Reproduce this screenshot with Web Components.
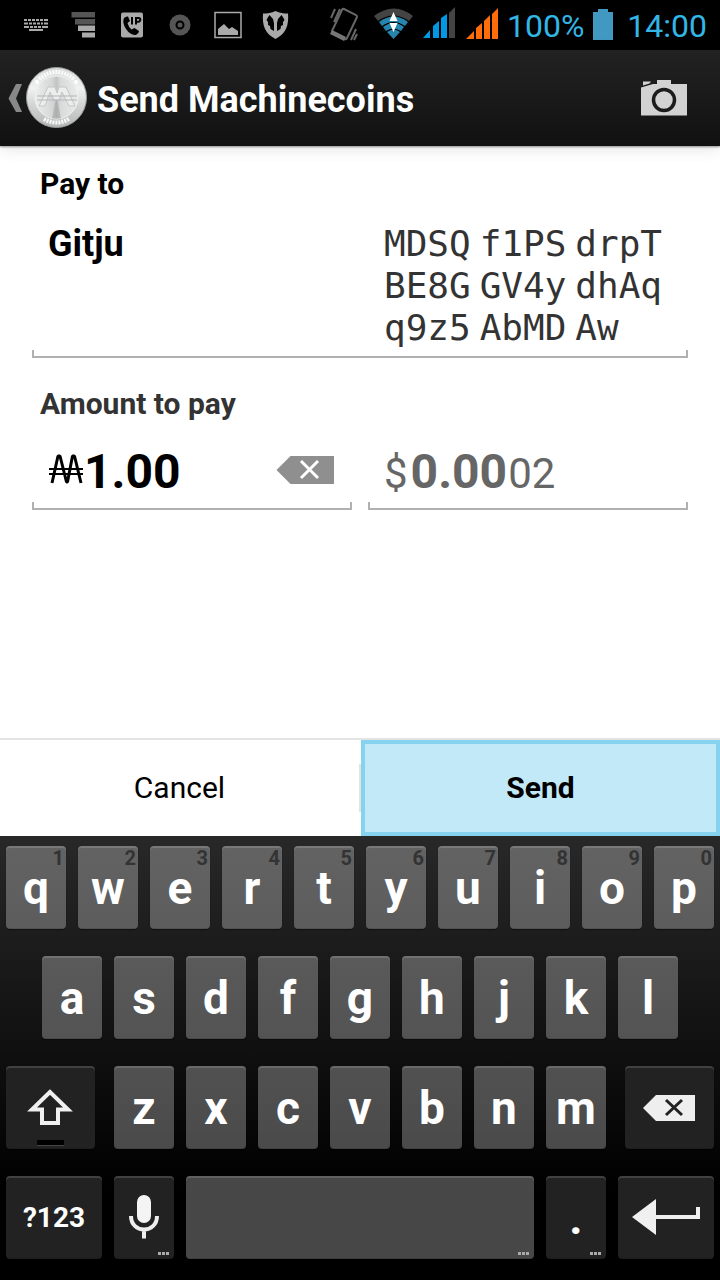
<!DOCTYPE html>
<html lang="en">
<head>
<meta charset="utf-8">
<meta name="viewport" content="width=device-width, initial-scale=1">
<title>Send Machinecoins</title>
<style>
  body { margin: 0; background: #fff; font-family: Roboto, "Noto Sans", sans-serif; }
</style>
</head>
<body>
<send-screen></send-screen>

<template id="status-bar">
  <style>
    :host { display: flex; justify-content: space-between; align-items: center; height: 50px; padding: 0 13px 0 18px; background: #000; color: #33b5e5; font-size: 32px; line-height: 48px; }
    div { display: flex; align-items: center; }
    .notes { gap: 12px; }
    .system { gap: 8px; }
    span { padding-top: 2px; }
    svg { display: block; flex: none; }
  </style>
  <div class="notes">
    <svg width="36" height="50" viewBox="18 0 36 50" fill="#aaa"><path d="M24 19h3v2h-3zM28 19h3v2h-3zM32 19h3v2h-3zM36 19h3v2h-3zM40 19h3v2h-3zM44 19h4v2h-4zM24 22.500h4v2h-4zM29 22.500h3v2h-3zM33 22.500h3v2h-3zM37 22.500h3v2h-3zM41 22.500h2v2h-2zM44 22.500h4v2h-4zM24 26h5v2h-5zM30 26h3v2h-3zM34 26h3v2h-3zM38 26h3v2h-3zM42 26h6v2h-6zM29 29h14v2H29z"/></svg>
    <svg width="36" height="50" viewBox="66 0 36 50"><path fill="#555" d="M71.500 12H95v5.500H71.500zM75 19h20v5.500H75z"/><path fill="#aaa" d="M78 25.500h17V31H78zM82 32.500h13v5H82z"/></svg>
    <svg width="36" height="50" viewBox="114 0 36 50"><rect x="121" y="12.500" width="22" height="25" rx="2" fill="#aaa"/><path d="M124 18q2-2 4-1.500l2 4.500-2.500 2q1 4 4 6.500l3-1.500 4.500 3q0 2.500-3 4-6 0-10-6-4-6-2-11z"/><path fill="none" stroke="#000" stroke-width="2" d="M132 17v7.500M136 24.500V18h2.500a1.800 1.800 0 0 1 0 3.700H136"/></svg>
    <svg width="36" height="50" viewBox="162 0 36 50"><circle cx="180" cy="25" r="10.500" fill="#555"/><circle cx="180" cy="25" r="3.500" fill="none" stroke="#000" stroke-width="2"/></svg>
    <svg width="36" height="50" viewBox="210 0 36 50"><path fill="none" stroke="#aaa" stroke-width="1.500" d="M215 12.500h26v25h-26z"/><path fill="#aaa" d="M218 35v-6l6-5 5 5 3-2 6 4v4z"/></svg>
    <svg width="36" height="50" viewBox="258 0 36 50"><path fill="#aaa" d="M275.500 11c4 2 8 2.500 12.500 2.500 1 12-2 20-12.500 25.500-10.500-5.500-13.500-13.500-12.500-25.500 4.500 0 8.500-.5 12.500-2.500z"/><path d="M269.500 15l3.500 4 1 4v8l-3.500-2-.5-3-2-1v-3l-1.500-2 1-2zM281.500 15l-3.500 4-1 4v8l3.500-2 .5-3 2-1v-3l1.500-2-1-2z"/></svg>
  </div>
  <div class="system">
    <svg width="37" height="50" viewBox="329 0 37 50"><g fill="none" stroke="#666" stroke-width="2"><path d="M345 9l12 6q1.500 1 1 2l-10 21q-1 2-3 1l-11-6q-1.500-1-1-2l10-21q.5-1.500 2-1zM341 9l-6 13M336 9l-4 9M357 29l-5 11M358 34l-3 6"/></g><path fill="#777" d="M333 30l14 7-2 4-14-7z"/></svg>
    <svg width="40" height="50" viewBox="372 0 40 50"><path fill="#444" d="M373 16q20-15 39 0l-4 5q-16-11-31 0z"/><path fill="#2585ad" d="M378 22q15-11 29 0l-3 4q-12-8-23 0zM382 27q11-8 21 0l-3 4q-8-5-15 0zM386 32q7-5 13 0l-6.500 7z"/><path fill="#fff" d="M392.500 12l4 9h-8zM392.500 32l4-9h-8z"/></svg>
    <svg width="36" height="50" viewBox="420 0 36 50"><path fill="#0099e5" d="M422 38l7-8v8zM432 38V26l6-5v17zM440 38V18l6-4v24z"/><path fill="#444" d="M448 38V13l6-6v31z"/></svg>
    <svg width="34" height="50" viewBox="464 0 34 50"><path fill="#ff6d0a" d="M465 39l8-8v8zM475 39V28l6-5v16zM483 39V21l6-6v24zM491 39V14l6-6v31z"/></svg>
    <span>100%</span>
    <svg width="27" height="50" viewBox="593 0 27 50"><path fill="#4199c2" d="M594 12h5V9h10v3h5v28h-20z"/></svg>
    <span>14:00</span>
  </div>
</template>

<template id="action-bar">
  <style>
    :host { display: flex; align-items: center; height: 96px; padding: 0 24px 0 8px; color: #fff; background: linear-gradient(#222, #111); box-shadow: 0 1px 2px rgba(0,0,0,.4), 0 2px 16px rgba(0,0,0,.12); position: relative; }
    button { border: 0; padding: 0; background: none; display: flex; align-items: center; color: inherit; }
    h1 { flex: 1; margin: 0 0 0 10px; padding-top: 4px; font-size: 36px; line-height: 48px; font-weight: 700; }
  </style>
  <button aria-label="Back">
    <svg width="79" height="96" viewBox="8 50 79 96">
      <defs>
        <linearGradient id="coin" x2="0" y2="1"><stop offset="0" stop-color="#d8d9d9"/><stop offset=".35" stop-color="#f0f1f1"/><stop offset=".6" stop-color="#d5d7d7"/><stop offset="1" stop-color="#b5b7b7"/></linearGradient>
        <linearGradient id="face" x2="1" y2="0"><stop offset="0" stop-color="#eceded"/><stop offset=".4" stop-color="#d5d7d7"/><stop offset=".5" stop-color="#c2c4c4"/><stop offset=".6" stop-color="#d9dbdb"/><stop offset="1" stop-color="#e9eaea"/></linearGradient>
      </defs>
      <path fill="#888" d="M16 84h6l-6 14.500 6 13.500h-6L8.500 98.500z"/>
      <circle cx="56.500" cy="97.500" r="30" fill="url(#coin)" stroke="#999b9b"/>
      <path fill="none" stroke="#fafafa" stroke-width="4" stroke-dasharray="2 1" d="M39 79q17.500-14 35 0M44 119q12.500 7 25 0"/>
      <circle cx="56.500" cy="97.500" r="21.500" fill="url(#face)" stroke="#eff0f0"/>
      <circle cx="37" cy="82" r="2" fill="#fff"/><circle cx="76" cy="82" r="2" fill="#fff"/>
      <path fill="#a2a4a4" opacity=".6" d="M56.500 97.500L52 118.500h9z"/>
      <path fill="#eceeee" stroke="#c3c6c6" stroke-width="1" d="M39 106l9-19h7l2 6 2-6h7l9 19h-6l-7-14-3 8h-5l-4-8-5 14z"/>
      <path stroke="#b2b6b6" d="M37 96h40M37 100h40"/>
    </svg>
  </button>
  <h1><slot></slot></h1>
  <button aria-label="Scan QR code">
    <svg width="64" height="96" viewBox="632 50 64 96"><path fill="#d2d2d2" d="M641 87.500l12-3.500h4v-4h14v4h16v31.500h-46z"/><path fill="#d2d2d2" d="M643 81.500h8l-1.500 2-6.500 2z"/><circle cx="664" cy="100" r="10.500" fill="none" stroke="#1b1b1b" stroke-width="3.500"/></svg>
  </button>
</template>

<template id="line-field">
  <style>
    :host { display: block; box-sizing: border-box; min-width: 0; padding: 0 16px 2px;
      background:
        linear-gradient(#b0b0b0, #b0b0b0) left bottom / 100% 2px no-repeat,
        linear-gradient(#b0b0b0, #b0b0b0) left bottom / 2px 8px no-repeat,
        linear-gradient(#b0b0b0, #b0b0b0) right bottom / 2px 8px no-repeat; }
  </style>
  <slot></slot>
</template>

<template id="pay-form">
  <style>
    :host { display: block; padding: 16px 32px; flex: 1; }
    h2, label { display: block; margin: 0; padding: 0 8px; font-size: 30px; line-height: 44px; font-weight: 700; color: #000; }
    label { color: #333; }
    .payee { display: grid; grid-template-columns: 1fr 1fr; column-gap: 16px; padding: 17px 0 7px; font-size: 36px; line-height: 42px; }
    .address { padding-left: 16px; margin-right: -8px; color: #333; }
    .address span { font-family: "DejaVu Sans Mono", monospace; }
    .to { margin-bottom: 24px; }
    .amounts { display: grid; grid-template-columns: repeat(2, minmax(0, 1fr)); gap: 16px; }
    .amount { box-sizing: border-box; display: flex; height: 82px; line-height: 76px; font-size: 42px; color: #666; }
    .coin { align-items: center; padding-top: 6px; color: #000; }
    .local { align-items: baseline; padding-top: 8px; gap: 1px; }
    .coin svg { display: block; flex: none; }
    input { border: 0; padding: 0; margin: 0; outline: 0; background: none; font: 700 48px/76px Roboto, "Noto Sans", sans-serif; height: 76px; color: inherit; min-width: 0; }
    .coin input { flex: 1; width: 0; padding-top: 4px; }
    .local input { field-sizing: content; margin-left: 2px; }
    button { border: 0; padding: 0; background: none; display: block; }
  </style>
  <h2>Pay to</h2>
  <line-field class="to">
    <div class="payee">
      <strong>Gitju</strong>
      <div class="address"><span>MDSQ</span> <span>f1PS</span> <span>drpT</span> <span>BE8G</span> <span>GV4y</span> <span>dhAq</span> <span>q9z5</span> <span>AbMD</span> <span>Aw</span></div>
    </div>
  </line-field>
  <label for="coins">Amount to pay</label>
  <div class="amounts">
    <line-field>
      <div class="amount coin">
        <svg width="36" height="36" viewBox="48 452 36 36" role="img" aria-label="Machinecoin"><g fill="none" stroke="#000"><path stroke-width="3" stroke-linejoin="bevel" d="M52 483l6-27h2l6.500 26h1l5-26h2l6.500 27"/><path stroke-width="2" d="M49 469h34M49 474h34"/></g></svg>
        <input id="coins" value="1.00" inputmode="decimal">
        <button aria-label="Clear amount"><svg width="60" height="36" viewBox="274 452 60 36"><path fill="#8f8f8f" d="M274.500 470l14-14H332v28h-43.500z"/><path stroke="#fff" stroke-width="3" d="M299 461l17 17M316 461l-17 17"/></svg></button>
      </div>
    </line-field>
    <line-field>
      <div class="amount local"><span>$</span><input aria-label="Amount in dollars" value="0.00" inputmode="decimal"><span>02</span></div>
    </line-field>
  </div>
</template>

<template id="button-bar">
  <style>
    :host { display: grid; grid-template-columns: 1fr 1fr; gap: 2px; height: 96px; border-top: 2px solid #e3e3e3; background: linear-gradient(#e3e3e3, #e3e3e3) center / 2px 48px no-repeat; }
    button { border: 0; margin: 0; padding: 0; background: none; color: #000; font: 400 30px/40px Roboto, "Noto Sans", sans-serif; }
    .send { font-weight: 700; background: #c2e9f8; border: 4px solid #85d3ef; }
  </style>
  <button class="cancel">Cancel</button>
  <button class="send">Send</button>
</template>

<template id="key-cap">
  <style>
    :host { display: block; grid-column: span var(--span, 2); }
    button { position: relative; display: flex; align-items: center; justify-content: center; width: 100%; height: 83px; padding: 0; border: 0; border-radius: 4px; color: #fff; font: 700 46px/84px Roboto, "Noto Sans", sans-serif;
      background: linear-gradient(rgba(255,255,255,.28), rgba(255,255,255,.28)); box-shadow: inset 0 2px 0 rgba(255,255,255,.14), inset 0 -1px 0 rgba(0,0,0,.12), 0 1px 1px rgba(0,0,0,.4); }
    :host([dark]) button { background: #222; }
    :host([small]) button { font-size: 28px; }
    .hint { position: absolute; top: 0; right: 2px; font-size: 20px; line-height: 25px; color: #333; }
    .more { position: absolute; right: 4px; bottom: 4px; }
    ::slotted(svg) { display: block; flex: none; }
  </style>
  <button><slot></slot></button>
</template>

<template id="soft-keyboard">
  <style>
    :host { display: grid; grid-template-columns: repeat(20, minmax(0, 1fr)); gap: 27px 12px; padding: 10px 6px 21px; background: linear-gradient(#282828, #000 80%); }
    .indent { grid-column: 2 / span 2; }
    .shift { grid-column: 1 / span 3; margin-right: 7px; }
    .erase { margin-left: 7px; }
  </style>
</template>

<script>
  const stamp = (host, id) => {
    const root = host.attachShadow({ mode: 'open' });
    root.append(document.getElementById(id).content.cloneNode(true));
    return root;
  };
  const define = (name, build) => customElements.define(name, class extends HTMLElement {
    connectedCallback() {
      if (this.shadowRoot) return;
      const root = stamp(this, name);
      if (build) build(this, root);
    }
  });

  define('status-bar');
  define('action-bar');
  define('line-field');
  define('pay-form');
  define('button-bar');

  define('key-cap', (host, root) => {
    const button = root.querySelector('button');
    if (host.dataset.span) host.style.setProperty('--span', host.dataset.span);
    if (host.dataset.label) button.setAttribute('aria-label', host.dataset.label);
    if (host.dataset.hint) {
      const hint = document.createElement('span');
      hint.className = 'hint';
      hint.textContent = host.dataset.hint;
      button.append(hint);
    }
    if (host.hasAttribute('more')) {
      button.insertAdjacentHTML('beforeend', '<svg class="more" width="12" height="3" fill="#aaa"><path d="M0 0h3v3H0zM4 0h3v3H4zM8 0h3v3H8z"/></svg>');
    }
  });

  const icons = {
    shift: '<svg width="89" height="83" viewBox="6 1066 89 83"><path fill="none" stroke="#f0f0f0" stroke-width="4" d="M50 1092l-18 17.500h10v13.500h16v-13.500h10z"/><path d="M37 1140h27v5H37z"/><path fill="#444" d="M37 1145h27v1H37z"/></svg>',
    erase: '<svg width="89" height="83" viewBox="625 1066 89 83"><path fill="#eee" d="M643 1108l13-13h39v26h-39z"/><path stroke="#222" stroke-width="3" d="M666 1100l16 15M682 1100l-16 15"/></svg>',
    mic: '<svg width="60" height="83" viewBox="114 1176 60 83"><rect x="137" y="1195" width="14" height="28" rx="7" fill="#f4f4f4"/><path fill="none" stroke="#eee" stroke-width="4" d="M131 1216c0 18 26 18 26 0M144 1229v9.500"/></svg>',
    enter: '<svg width="96" height="83" viewBox="618 1176 96 83"><path fill="#f0f0f0" d="M632 1217l24-18v16h40v-8h4v12h-44v16z"/></svg>'
  };
  define('soft-keyboard', (host, root) => {
    const letter = (c, hint, cls) => `<key-cap${hint ? ` data-hint="${hint}"` : ''}${cls ? ` class="${cls}"` : ''}>${c}</key-cap>`;
    root.append(document.createRange().createContextualFragment(
      [...'qwertyuiop'].map((c, i) => letter(c, String((i + 1) % 10))).join('') +
      [...'asdfghjkl'].map((c, i) => letter(c, '', i ? '' : 'indent')).join('') +
      `<key-cap dark class="shift" data-label="Shift">${icons.shift}</key-cap>` +
      [...'zxcvbnm'].map(c => letter(c)).join('') +
      `<key-cap dark class="erase" data-span="3" data-label="Delete">${icons.erase}</key-cap>` +
      '<key-cap dark small data-span="3">?123</key-cap>' +
      `<key-cap dark more data-label="Voice input">${icons.mic}</key-cap>` +
      '<key-cap more data-span="10" data-label="Space"></key-cap>' +
      '<key-cap dark more>.</key-cap>' +
      `<key-cap dark data-span="3" data-label="Enter">${icons.enter}</key-cap>`));
  });

  customElements.define('send-screen', class extends HTMLElement {
    constructor() {
      super();
      this.attachShadow({ mode: 'open' }).innerHTML = `
        <style>:host { display: flex; flex-direction: column; min-height: 100vh; }</style>
        <status-bar></status-bar>
        <action-bar>Send Machinecoins</action-bar>
        <pay-form></pay-form>
        <button-bar></button-bar>
        <soft-keyboard></soft-keyboard>`;
    }
  });
</script>
</body>
</html>
